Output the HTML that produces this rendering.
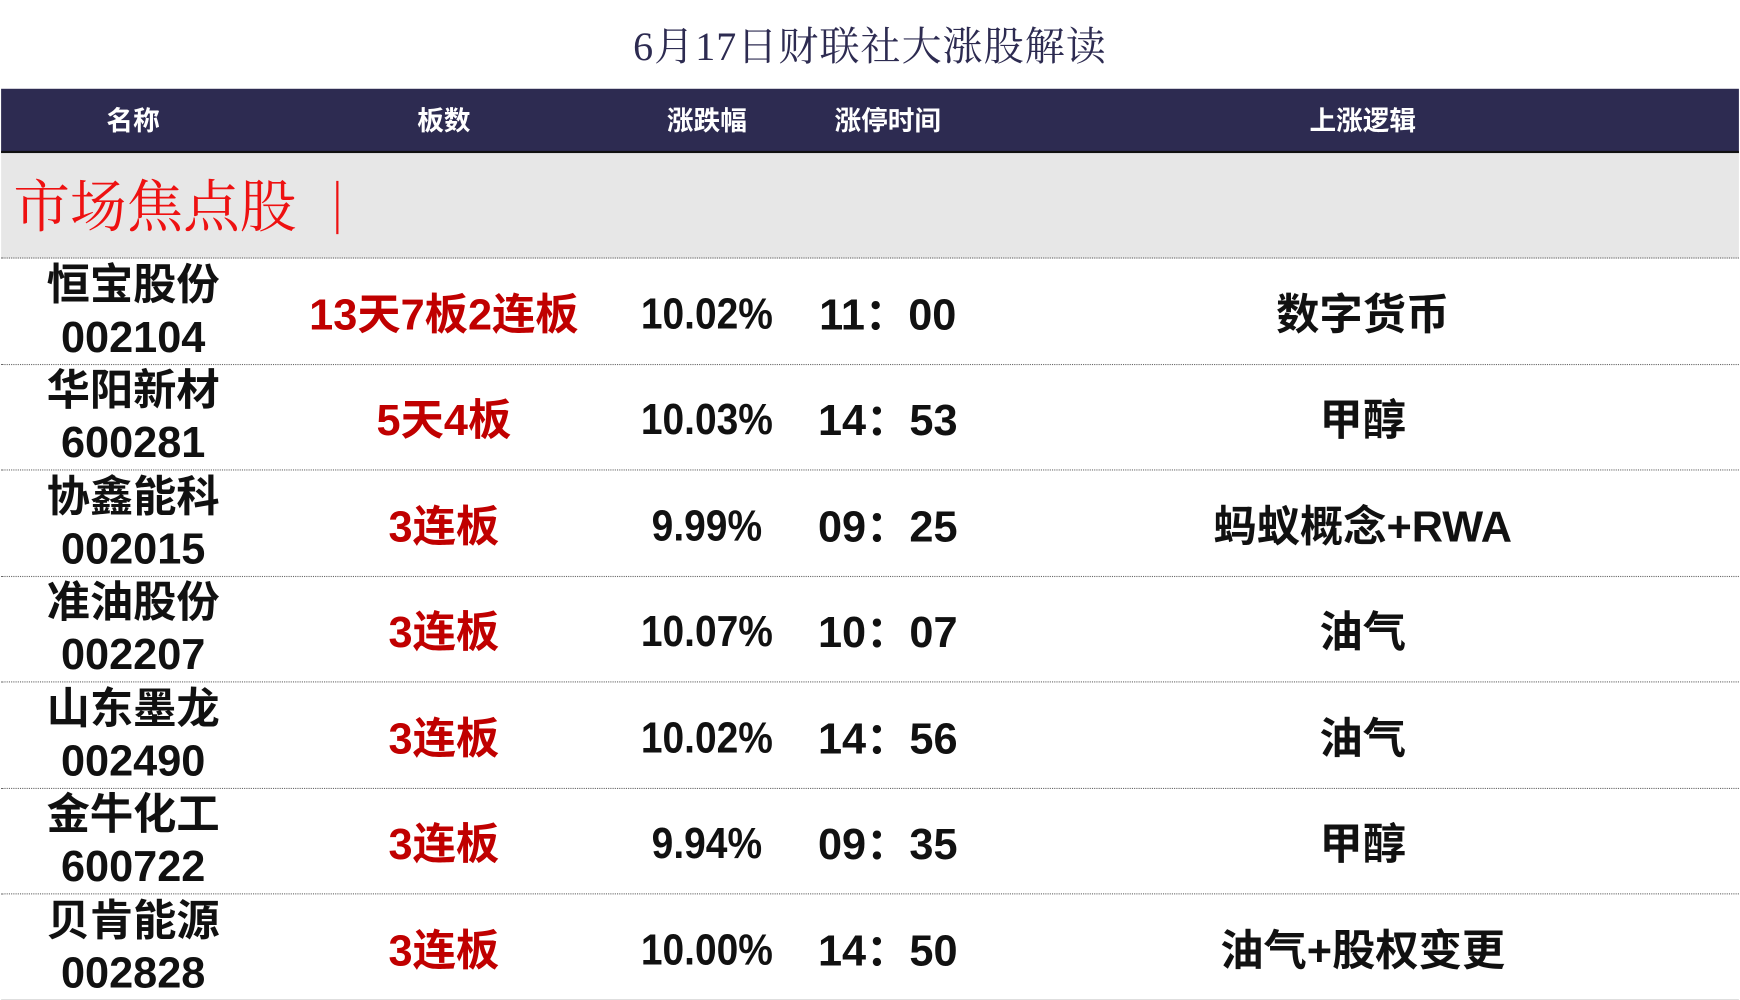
<!DOCTYPE html>
<html><head><meta charset="utf-8"><style>
html,body{margin:0;padding:0;background:#fff;overflow:hidden;width:1740px;height:1000px}
#w{width:1568px;height:901px;transform:scale(1.1097);transform-origin:0 0;position:relative;font-family:"Liberation Sans","Noto Sans CJK SC",sans-serif}
.title{position:absolute;top:17px;left:0;width:1568px;text-align:center;font-family:"Liberation Serif","Noto Serif CJK SC",serif;font-size:36px;letter-spacing:1px;color:#2d2b51;line-height:50px}
.hdr{position:absolute;top:80px;left:1px;width:1566px;height:56px;background:#2d2b51;border-bottom:2px solid #111}
.hdr span{position:absolute;top:0;line-height:60px;color:#fff;font-size:24px;font-weight:bold;transform:translateX(-50%)}
.sec{position:absolute;top:138px;left:1px;width:1566px;height:94px;background:#e7e7e7;border-bottom:1px dotted #666}
.sec .t{position:absolute;left:11px;top:22px;font-family:"Liberation Serif","Noto Serif CJK SC",serif;font-size:51px;color:#ee1111;line-height:56px}
.sec .bar{position:absolute;left:302px;top:25px;width:2px;height:48px;background:#ee1111}
.row{position:absolute;left:1px;width:1566px;height:95px;border-bottom:1px dotted #666}
.c{position:absolute;top:0;height:95px;display:flex;align-items:center;justify-content:center;transform:translateX(-50%);white-space:nowrap;font-size:39px;font-weight:bold;color:#111}
.p{transform:translateX(-50%) scaleX(0.9);padding-top:6px;box-sizing:border-box}
.n{line-height:47px;text-align:center;flex-direction:column}
.r{color:#c00000}
</style></head><body><div id="w">
<div class="title">6月17日财联社大涨股解读</div>
<div class="hdr"><span style="left:119px">名称</span><span style="left:399px">板数</span><span style="left:636px">涨跌幅</span><span style="left:799px">涨停时间</span><span style="left:1227px">上涨逻辑</span></div>
<div class="sec"><div class="t">市场焦点股</div><div class="bar"></div></div>
<div class="row" style="top:233px"><div class="c n" style="left:119px">恒宝股份<br>002104</div><div class="c r" style="left:399px">13天7板2连板</div><div class="c p" style="left:636px">10.02%</div><div class="c" style="left:799px">11：00</div><div class="c" style="left:1227px">数字货币</div></div>
<div class="row" style="top:328px"><div class="c n" style="left:119px">华阳新材<br>600281</div><div class="c r" style="left:399px">5天4板</div><div class="c p" style="left:636px">10.03%</div><div class="c" style="left:799px">14：53</div><div class="c" style="left:1227px">甲醇</div></div>
<div class="row" style="top:424px"><div class="c n" style="left:119px">协鑫能科<br>002015</div><div class="c r" style="left:399px">3连板</div><div class="c p" style="left:636px">9.99%</div><div class="c" style="left:799px">09：25</div><div class="c" style="left:1227px">蚂蚁概念+RWA</div></div>
<div class="row" style="top:519px"><div class="c n" style="left:119px">准油股份<br>002207</div><div class="c r" style="left:399px">3连板</div><div class="c p" style="left:636px">10.07%</div><div class="c" style="left:799px">10：07</div><div class="c" style="left:1227px">油气</div></div>
<div class="row" style="top:615px"><div class="c n" style="left:119px">山东墨龙<br>002490</div><div class="c r" style="left:399px">3连板</div><div class="c p" style="left:636px">10.02%</div><div class="c" style="left:799px">14：56</div><div class="c" style="left:1227px">油气</div></div>
<div class="row" style="top:710px"><div class="c n" style="left:119px">金牛化工<br>600722</div><div class="c r" style="left:399px">3连板</div><div class="c p" style="left:636px">9.94%</div><div class="c" style="left:799px">09：35</div><div class="c" style="left:1227px">甲醇</div></div>
<div class="row" style="top:806px;border-bottom:1px solid #333"><div class="c n" style="left:119px">贝肯能源<br>002828</div><div class="c r" style="left:399px">3连板</div><div class="c p" style="left:636px">10.00%</div><div class="c" style="left:799px">14：50</div><div class="c" style="left:1227px">油气+股权变更</div></div>
</div></body></html>
